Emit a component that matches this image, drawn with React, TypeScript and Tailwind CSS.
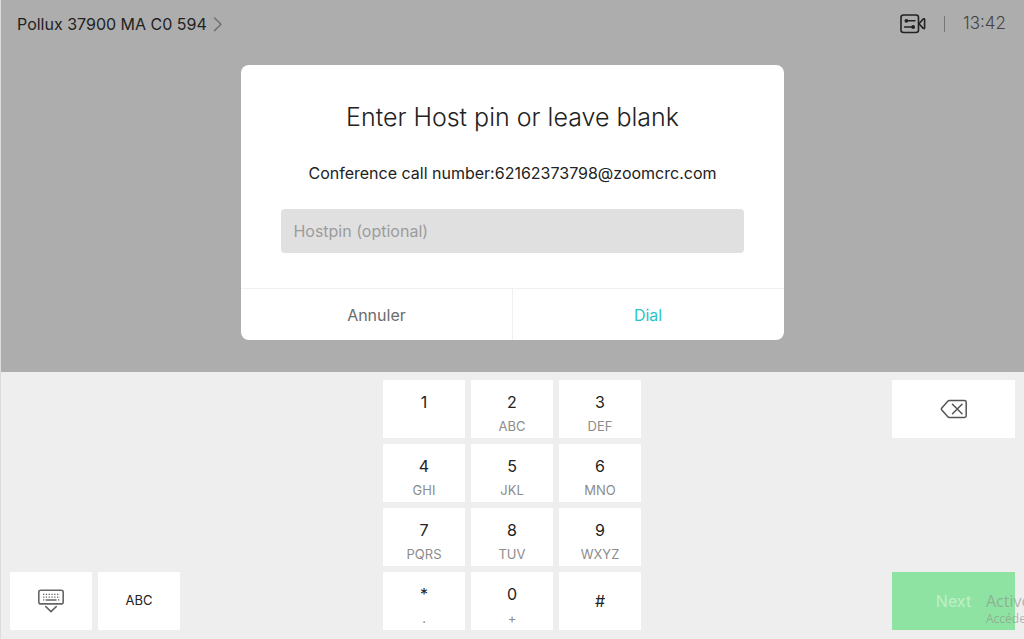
import React, { useState } from 'react';

type Key = {
  label: string;
  sub?: string;
  centered?: boolean;
};

const keys: Key[] = [
  { label: '1' },
  { label: '2', sub: 'ABC' },
  { label: '3', sub: 'DEF' },
  { label: '4', sub: 'GHI' },
  { label: '5', sub: 'JKL' },
  { label: '6', sub: 'MNO' },
  { label: '7', sub: 'PQRS' },
  { label: '8', sub: 'TUV' },
  { label: '9', sub: 'WXYZ' },
  { label: '*', sub: '.' },
  { label: '0', sub: '+' },
  { label: '#', centered: true },
];

function ChevronIcon() {
  return (
    <svg width="10" height="16" viewBox="0 0 10 16" fill="none" stroke="#707070" strokeWidth="1.5" strokeLinecap="round" strokeLinejoin="round">
      <path d="M1.5 2 8 8.3 1.5 14.6" />
    </svg>
  );
}

function CameraIcon() {
  return (
    <svg width="26" height="20" viewBox="0 0 26 20" fill="none" stroke="#222" strokeWidth="1.6" strokeLinecap="round" strokeLinejoin="round">
      <rect x="1" y="1" width="17.5" height="17.5" rx="2.5" />
      <path d="M19 9.8 23.2 5Q24.6 4.2 24.6 5.8V13.8Q24.6 15.2 23.2 14.4L19 9.8" />
      <path d="M6 6.8H15M4.5 13H13" strokeWidth="1.4" />
      <circle cx="6.4" cy="6.8" r="1.9" fill="#222" stroke="none" />
      <circle cx="13.2" cy="13" r="1.9" fill="#222" stroke="none" />
    </svg>
  );
}

function BackspaceIcon() {
  return (
    <svg width="28" height="20" viewBox="0 0 28 20" fill="none" stroke="#555" strokeWidth="1.5" strokeLinejoin="round" strokeLinecap="round">
      <path d="M9.2 1.5H24.5Q26.2 1.5 26.2 3.2V16.8Q26.2 18.5 24.5 18.5H9.2Q8.4 18.5 7.8 17.8L1.6 10.8Q1 10 1.6 9.2L7.8 2.2Q8.4 1.5 9.2 1.5Z" />
      <path d="M12.5 5.2 22 14.8M22 5.2 12.5 14.8" />
    </svg>
  );
}

function KeyboardIcon() {
  return (
    <svg width="28" height="24" viewBox="0 0 28 24" fill="none" stroke="#666" strokeWidth="1.6" strokeLinecap="round" strokeLinejoin="round">
      <rect x="1.8" y="1.3" width="24.4" height="13.6" rx="2" />
      <path d="M6 5.4H23M6 8.1H23" strokeWidth="1.3" strokeDasharray="1.3 1.5" strokeLinecap="butt" />
      <path d="M6 10.8H7.3M21 10.8H22.3" strokeWidth="1.3" strokeLinecap="butt" />
      <path d="M9.2 11H19" strokeWidth="1.6" />
      <path d="M8.8 17.6 14 22.6 19.2 17.6" />
    </svg>
  );
}

export default function App() {
  const [pin, setPin] = useState('');

  return (
    <div className="relative min-h-screen flex flex-col overflow-hidden border-l border-[#dcdcdc] bg-[#eeeeee] font-['Inter','Liberation_Sans',sans-serif] text-[#222]">
      {/* Dimmed home screen with the dialog */}
      <main className="flex-1 bg-[#adadad] pb-8">
        <header className="flex items-center justify-between pl-4 pr-[18px] h-12">
          <button type="button" className="flex items-center gap-1.5 text-base">
            Pollux 37900 MA C0 594
            <ChevronIcon />
          </button>
          <div className="flex items-center gap-[18px] text-[17px] font-light text-[#444]">
            <button type="button" aria-label="Camera">
              <CameraIcon />
            </button>
            <span className="w-px h-4 bg-[#777]" />
            <time>13:42</time>
          </div>
        </header>

        <form
          onSubmit={(e) => e.preventDefault()}
          className="mx-auto mt-[17px] w-[53%] min-w-[480px] rounded-lg bg-white text-center"
        >
          <div className="px-10 pt-9 pb-[35px]">
            <h1 className="text-[25px] leading-8 font-light">Enter Host pin or leave blank</h1>
            <p className="mt-7 text-base leading-6">Conference call number:62162373798@zoomcrc.com</p>
            <input
              type="text"
              aria-label="Hostpin (optional)"
              placeholder="Hostpin (optional)"
              value={pin}
              onChange={(e) => setPin(e.target.value)}
              className="mt-6 block w-full h-11 rounded bg-[#e0e0e0] px-3 text-base placeholder:text-[#9c9c9c] outline-none"
            />
          </div>
          <div className="grid grid-cols-2 border-t border-[#f0f0f0] text-base">
            <button type="button" className="h-[51px] border-r border-[#f0f0f0] text-[#6c6c6c]">Annuler</button>
            <button type="submit" className="h-[51px] text-[#2cc3c8]">Dial</button>
          </div>
        </form>
      </main>

      {/* Keypad */}
      <section className="grid grid-cols-[1fr_auto_1fr] pt-2 pb-[9px] pl-2 pr-[9px]">
        <div className="flex items-end gap-1.5 pl-px">
          <button type="button" aria-label="Hide keyboard" className="flex items-center justify-center w-[82px] h-[58px] bg-white">
            <KeyboardIcon />
          </button>
          <button type="button" className="w-[82px] h-[58px] bg-white text-[13px]">ABC</button>
        </div>

        <div className="grid grid-cols-3 gap-1.5">
          {keys.map((key) => (
            <button
              key={key.label}
              type="button"
              onClick={() => setPin(pin + key.label)}
              className={`flex flex-col items-center w-[82px] h-[58px] bg-white ${key.centered ? 'justify-center' : 'pt-2.5'}`}
            >
              <span className="text-base leading-6">{key.label}</span>
              {key.sub && <span className="text-[13px] leading-6 text-[#8c8c8c]">{key.sub}</span>}
            </button>
          ))}
        </div>

        <div className="flex flex-col items-end justify-between">
          <button
            type="button"
            aria-label="Delete"
            onClick={() => setPin(pin.slice(0, -1))}
            className="flex items-center justify-center w-[123px] h-[58px] bg-white"
          >
            <BackspaceIcon />
          </button>
          <button type="button" className="w-[123px] h-[58px] bg-[#8fe3a2] text-base text-[#bdf0c8]">Next</button>
        </div>
      </section>

      {/* Activation notice, runs off the right edge */}
      <div className="absolute bottom-3 left-full -ml-[38px] whitespace-nowrap font-['Open_Sans',sans-serif] text-[#8c8c8c]/60 pointer-events-none">
        <p className="text-base leading-5">Active</p>
        <p className="text-xs leading-4">Accéde</p>
      </div>
    </div>
  );
}
